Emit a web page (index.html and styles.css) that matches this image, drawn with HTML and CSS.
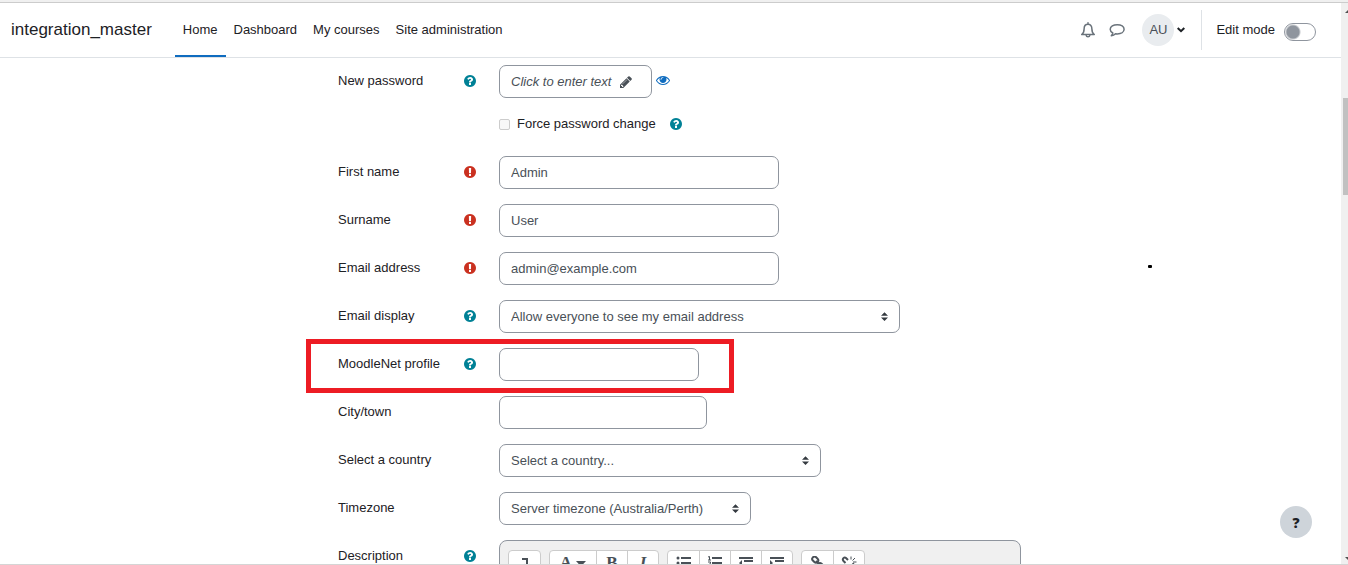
FILE: index.html
```
<!DOCTYPE html>
<html lang="en">
<head>
    <meta charset="utf-8">
    <title>integration_master: Edit profile</title>
    <link rel="stylesheet" href="styles.css">
</head>
<body>
    <!-- shared icons -->
    <svg class="sprite" viewBox="0 0 1792 1792">
        <symbol id="help" viewBox="0 0 1792 1792"><path d="M1024 1376v-192q0-14-9-23t-23-9h-192q-14 0-23 9t-9 23v192q0 14 9 23t23 9h192q14 0 23-9t9-23zm256-672q0-88-55.5-163t-138.5-116-170-41q-243 0-371 213-15 24 8 42l132 100q7 6 19 6 16 0 25-12 53-68 86-92 34-24 86-24 48 0 85.5 26t37.5 59q0 38-20 61t-68 45q-63 28-115.5 86.5t-52.5 125.5v36q0 14 9 23t23 9h192q14 0 23-9t9-23q0-19 21.5-49.5t54.5-49.5q32-18 49-28.5t46-35 44.5-48 28-60.5 12.5-81zm384 192q0 209-103 385.5t-279.5 279.5-385.5 103-385.5-103-279.5-279.5-103-385.5 103-385.5 279.5-279.5 385.5-103 385.5 103 279.5 279.5 103 385.5z"/></symbol>
        <symbol id="required" viewBox="0 0 1792 1792"><path d="M896 128q209 0 385.5 103t279.5 279.5 103 385.5-103 385.5-279.5 279.5-385.5 103-385.5-103-279.5-279.5-103-385.5 103-385.5 279.5-279.5 385.5-103zm128 1247v-190q0-14-9-23.5t-22-9.5h-192q-13 0-23 10t-10 23v190q0 13 10 23t23 10h192q13 0 22-9.5t9-23.5zm-2-344l18-621q0-12-10-18-10-8-24-8h-220q-14 0-24 8-10 6-10 18l17 621q0 10 10 17.5t24 7.5h185q14 0 23.5-7.5t10.5-17.5z"/></symbol>
    </svg>

    <div class="window-edge"></div>
    <div class="viewport">
        <div class="page">
            <header class="navbar">
                <a class="brand" href="#">integration_master</a>
                <nav class="primary">
                    <a class="active" href="#">Home</a>
                    <a href="#">Dashboard</a>
                    <a href="#">My courses</a>
                    <a href="#">Site administration</a>
                </nav>
                <div class="usernav">
                    <button class="icon-btn" aria-label="Notifications">
                        <svg width="16" height="16" viewBox="0 0 16 16" fill="none" stroke="#6a737b" stroke-width="1.5"><path d="M8 .8v1.400M1.700 12.500h12.600c-1.900-1.400-2.400-3.200-2.400-5.600C11.900 4 10.400 2.300 8 2.300S4.100 4 4.100 6.900c0 2.400-.5 4.200-2.400 5.600zM6.200 13.500c.2 1.800 3.400 1.800 3.600 0" stroke-linejoin="round" stroke-linecap="round"/></svg>
                    </button>
                    <button class="icon-btn" aria-label="Messages">
                        <svg width="16" height="16" viewBox="0 0 16 16" fill="none" stroke="#6a737b" stroke-width="1.5"><path d="M8.300 2.700C4.400 2.700 1.200 4.600 1.200 7.300c0 1.500 1 2.800 2.600 3.700-.2 1.100-.7 1.900-1.500 2.700 1.800-.2 3.200-.9 4.200-1.900.6.1 1.200.1 1.800.1 3.900 0 6.800-1.900 6.800-4.600S12.200 2.700 8.300 2.700z" stroke-linejoin="round"/></svg>
                    </button>
                    <button class="user-menu" aria-label="User menu">
                        <span class="avatar">AU</span>
                        <svg width="8" height="6" viewBox="0 0 8 6" fill="none" stroke="#1d2125" stroke-width="2"><path d="M.7 1L4 4.200 7.300 1"/></svg>
                    </button>
                    <div class="editmode">
                        <label for="editmode">Edit mode</label>
                        <input class="switch" type="checkbox" id="editmode">
                    </div>
                </div>
            </header>

            <form class="mform">
                <div class="fitem">
                    <div class="flabel">
                        <label for="newpassword">New password</label>
                        <svg class="icon help"><use href="#help"/></svg>
                    </div>
                    <div class="felement">
                        <button type="button" class="control unmask" id="newpassword">
                            Click to enter text
                            <svg width="14" height="14" viewBox="0 0 1792 1792" fill="#495057"><path d="M491 1536l91-91-235-235-91 91v107h128v128h107zm523-928q0-22-22-22-10 0-17 7l-542 542q-7 7-7 17 0 22 22 22 10 0 17-7l542-542q7-7 7-17zm-54-192l416 416-832 832h-416v-416zm683 96q0 53-37 90l-166 166-416-416 166-165q36-38 90-38 53 0 91 38l235 234q37 39 37 91z"/></svg>
                        </button>
                        <button type="button" class="reveal" aria-label="Reveal">
                            <svg width="14" height="14" viewBox="0 0 1792 1792" fill="#0f6cbf"><path d="M1664 960q-152-236-381-353 61 104 61 225 0 185-131.500 316.500t-316.500 131.500-316.500-131.500-131.500-316.500q0-121 61-225-229 117-381 353 133 205 333.500 326.500t434.500 121.500 434.500-121.500 333.500-326.500zm-720-384q0-20-14-34t-34-14q-125 0-214.500 89.500t-89.500 214.500q0 20 14 34t34 14 34-14 14-34q0-86 61-147t147-61q20 0 34-14t14-34zm848 384q0 34-20 69-140 230-376.500 368.500t-499.500 138.500-499.500-139-376.500-368q-20-35-20-69t20-69q140-229 376.500-368t499.500-139 499.500 139 376.500 368q20 35 20 69z"/></svg>
                        </button>
                    </div>
                </div>
                <div class="fitem fcheckbox">
                    <div class="felement">
                        <input type="checkbox" class="check" id="forcechange">
                        <label for="forcechange">Force password change</label>
                        <svg class="icon help"><use href="#help"/></svg>
                    </div>
                </div>
                <div class="fitem">
                    <div class="flabel">
                        <label for="firstname">First name</label>
                        <svg class="icon required"><use href="#required"/></svg>
                    </div>
                    <div class="felement"><input type="text" class="control size-30" id="firstname" value="Admin"></div>
                </div>
                <div class="fitem">
                    <div class="flabel">
                        <label for="lastname">Surname</label>
                        <svg class="icon required"><use href="#required"/></svg>
                    </div>
                    <div class="felement"><input type="text" class="control size-30" id="lastname" value="User"></div>
                </div>
                <div class="fitem">
                    <div class="flabel">
                        <label for="email">Email address</label>
                        <svg class="icon required"><use href="#required"/></svg>
                    </div>
                    <div class="felement"><input type="text" class="control size-30" id="email" value="admin@example.com"></div>
                </div>
                <div class="fitem">
                    <div class="flabel">
                        <label for="maildisplay">Email display</label>
                        <svg class="icon help"><use href="#help"/></svg>
                    </div>
                    <div class="felement">
                        <select class="control select-email" id="maildisplay"><option>Allow everyone to see my email address</option></select>
                    </div>
                </div>
                <div class="fitem marked">
                    <div class="flabel">
                        <label for="moodlenet">MoodleNet profile</label>
                        <svg class="icon help"><use href="#help"/></svg>
                    </div>
                    <div class="felement"><input type="text" class="control size-20" id="moodlenet"></div>
                </div>
                <div class="fitem">
                    <div class="flabel"><label for="city">City/town</label></div>
                    <div class="felement"><input type="text" class="control size-21" id="city"></div>
                </div>
                <div class="fitem">
                    <div class="flabel"><label for="country">Select a country</label></div>
                    <div class="felement">
                        <select class="control select-country" id="country"><option>Select a country...</option></select>
                    </div>
                </div>
                <div class="fitem">
                    <div class="flabel"><label for="timezone">Timezone</label></div>
                    <div class="felement">
                        <select class="control select-timezone" id="timezone"><option>Server timezone (Australia/Perth)</option></select>
                    </div>
                </div>
                <div class="fitem">
                    <div class="flabel">
                        <span>Description</span>
                        <svg class="icon help"><use href="#help"/></svg>
                    </div>
                    <div class="editor">
                        <div class="group">
                            <button type="button" aria-label="Show more buttons"><svg width="14" height="14" viewBox="0 0 14 14" fill="none" stroke="#495057" stroke-width="2"><path d="M4 3h5v8M6 8.500L9 12l3-3.500"/></svg></button>
                        </div>
                        <div class="group">
                            <button type="button" class="wide" aria-label="Paragraph styles"><b>A</b><svg width="10" height="14" viewBox="0 0 10 14" fill="#495057"><path d="M0 5h10L5 10.500z"/></svg></button>
                            <button type="button"><b>B</b></button>
                            <button type="button"><b><i>I</i></b></button>
                        </div>
                        <div class="group">
                            <button type="button" aria-label="Unordered list"><svg width="16" height="14" viewBox="0 0 16 14" fill="#495057"><path d="M5 1h10v2H5zM5 6h10v2H5zM5 11h10v2H5z"/><circle cx="2" cy="2" r="1.500"/><circle cx="2" cy="7" r="1.500"/><circle cx="2" cy="12" r="1.500"/></svg></button>
                            <button type="button" aria-label="Ordered list"><svg width="16" height="14" viewBox="0 0 16 14" fill="#495057"><path d="M5 1h10v2H5zM5 6h10v2H5zM5 11h10v2H5z"/><path d="M1 1l1.500-.5V4M1 4h3M1 6h2.500v1.500L1 9h3M1 10.500h2.500v3H1M1.500 12h2" fill="none" stroke="#495057"/></svg></button>
                            <button type="button" aria-label="Outdent"><svg width="16" height="14" viewBox="0 0 16 14" fill="#495057"><path d="M1 1h14v2H1zM6 4h9v2H6zM6 8h9v2H6zM1 11h14v2H1zM4 4v6L1 7z"/></svg></button>
                            <button type="button" aria-label="Indent"><svg width="16" height="14" viewBox="0 0 16 14" fill="#495057"><path d="M1 1h14v2H1zM6 4h9v2H6zM6 8h9v2H6zM1 11h14v2H1zM1 4v6l3-3z"/></svg></button>
                        </div>
                        <div class="group">
                            <button type="button" aria-label="Link"><svg width="14" height="14" viewBox="0 0 14 14" fill="none" stroke="#495057" stroke-width="2"><rect x="1" y="1.300" width="6.500" height="4.600" rx="2.200" transform="rotate(45 4.200 3.600)"/><rect x="6.500" y="7.800" width="6.500" height="4.600" rx="2.200" transform="rotate(45 9.700 10)"/><path d="M5 5l4 4"/></svg></button>
                            <button type="button" aria-label="Unlink"><svg width="16" height="14" viewBox="0 0 16 14" fill="none" stroke="#495057" stroke-width="2"><path d="M4.500 7L2.500 5c-1.800-2 .8-4.500 2.500-3l2 2M9 10l2 2c1.800 1.500 4.300-.8 2.500-2.700l-2-2"/><path d="M10 3.500V.5M11.500 4.500L14 2M12 6h3.500M6 11v3M4.500 10L2 12.500" stroke-width="1"/></svg></button>
                        </div>
                    </div>
                </div>
            </form>
        </div>
        <div class="scrollbar">
            <span class="arrow up"></span>
            <span class="thumb"></span>
            <span class="arrow down"></span>
        </div>
    </div>
    <button class="footer-help">?</button>
    <span class="pointer"></span>
</body>
</html>
```
FILE: styles.css
```
*, *::after { box-sizing: border-box; }
body {
    margin: 0;
    height: 100vh;
    display: flex;
    flex-direction: column;
    overflow: hidden;
    position: relative;
    background: #fff;
    border-bottom: 1px solid #d5d5d5;
    color: #1d2125;
    font: 13px/20px "Liberation Sans", Arial, sans-serif;
}
button, input, select { font: inherit; color: inherit; margin: 0; }
button { padding: 0; border: 0; background: none; cursor: pointer; }
a { color: inherit; text-decoration: none; }
svg { display: block; flex: none; }
.sprite { position: absolute; width: 0; height: 0; }

.window-edge { flex: none; height: 3px; background: #f0f0f0; border-bottom: 1px solid #ccc; }
.viewport { flex: 1; min-height: 0; display: flex; }
.page { flex: 1; min-width: 0; overflow: hidden; }

/* top bar */
.navbar { display: flex; height: 55px; padding: 0 25px 0 11px; border-bottom: 1px solid #dee2e6; }
.brand { margin-right: 23px; font-size: 17px; line-height: 53px; }
.primary { display: flex; }
.primary a { padding: 0 8px; line-height: 53px; }
.primary .active { border-bottom: 2px solid #0f6cbf; }
.usernav { display: flex; align-items: center; margin-left: auto; }
.icon-btn { width: 29px; display: flex; justify-content: center; }
.user-menu { display: flex; align-items: center; gap: 3px; margin: 0 16px 0 11px; }
.avatar { width: 32px; height: 32px; border-radius: 50%; background: #e9ecef; color: #495057; line-height: 32px; }
.editmode { display: flex; align-items: center; gap: 9px; height: 40px; padding-left: 14px; border-left: 1px solid #dee2e6; }
.switch {
    appearance: none;
    width: 32px;
    height: 18px;
    margin-top: 4px;
    border: 1px solid #8f959e;
    border-radius: 9px;
    background: radial-gradient(circle at 8px 8px, #8f959e 6px, #fff 8px);
}

/* form */
.mform {
    display: flex;
    flex-direction: column;
    gap: 15px;
    max-width: 747px;
    margin: 0 auto;
    padding: 7px 23px 0 41px;
}
.fitem { display: grid; grid-template-columns: 161px 1fr; position: relative; }
.flabel { display: flex; justify-content: space-between; align-items: center; height: 31px; padding-right: 22px; }
.felement { display: flex; align-items: center; }
.fcheckbox { padding: 1px 0 7px; }
.fcheckbox .felement { grid-column: 2; gap: 7px; }
.fcheckbox .icon { margin-left: 6px; }
.icon { width: 14px; height: 14px; }
.help { fill: #008196; }
.required { fill: #ca3120; }

.control {
    height: 33px;
    padding: 0 11px;
    border: 1px solid #8f959e;
    border-radius: 7px;
    background: #fff;
    color: #495057;
}
select.control {
    appearance: none;
    background: #fff url("data:image/svg+xml,%3Csvg xmlns='http://www.w3.org/2000/svg' viewBox='0 0 4 5'%3E%3Cpath fill='%23343a40' d='M2 0L0 2h4zm0 5L0 3h4z'/%3E%3C/svg%3E") no-repeat right 11px center / 7px 9px;
}
.unmask { display: flex; align-items: center; gap: 8px; width: 153px; font-style: italic; }
.reveal { margin-left: 4px; padding-bottom: 4px; }
.check { appearance: none; width: 11px; height: 11px; border: 1px solid #ccc; border-radius: 2px; background: #f8f8f8; }
.size-20 { width: 200px; }
.size-21 { width: 208px; }
.size-30 { width: 280px; }
.select-email { width: 401px; }
.select-country { width: 322px; }
.select-timezone { width: 252px; }

/* frame round the MoodleNet row */
.marked::after {
    content: "";
    position: absolute;
    top: -9px;
    left: -32px;
    width: 428px;
    height: 54px;
    border: 5px solid #ed1c24;
    pointer-events: none;
}

/* editor toolbar */
.editor {
    display: flex;
    gap: 8px;
    height: 200px;
    padding: 9px 8px;
    border: 1px solid #8f959e;
    border-radius: 8px;
    background: #f0f0f0;
}
.group { display: flex; height: 30px; border: 1px solid #ccc; border-radius: 4px; background: #fff; }
.group button {
    display: flex;
    align-items: flex-start;
    justify-content: center;
    gap: 4px;
    width: 31px;
    padding-top: 5px;
    color: #495057;
    font: 17px/14px "Liberation Serif", serif;
}
.group button + button { border-left: 1px solid #ccc; }
.group .wide { width: 46px; }

/* window scroll bar */
.scrollbar { position: relative; flex: none; width: 7px; background: #f0f0f0; overflow: hidden; }
.thumb { position: absolute; top: 95px; left: 2px; width: 5px; height: 97px; background: #c1c1c1; }
.arrow { position: absolute; left: 4px; border: 4px solid transparent; }
.up { top: 6px; border-top: 0; border-bottom-color: #505050; }
.down { bottom: 3px; border-bottom: 0; border-top-color: #505050; }

.footer-help {
    position: absolute;
    right: 36px;
    bottom: 26px;
    width: 32px;
    height: 32px;
    border-radius: 50%;
    background: #ced4da;
    font: 800 14px "Open Sans", sans-serif;
}
.pointer { position: absolute; top: 265px; left: 1148px; width: 4px; height: 3px; border-radius: 1px; background: #000; }
```
